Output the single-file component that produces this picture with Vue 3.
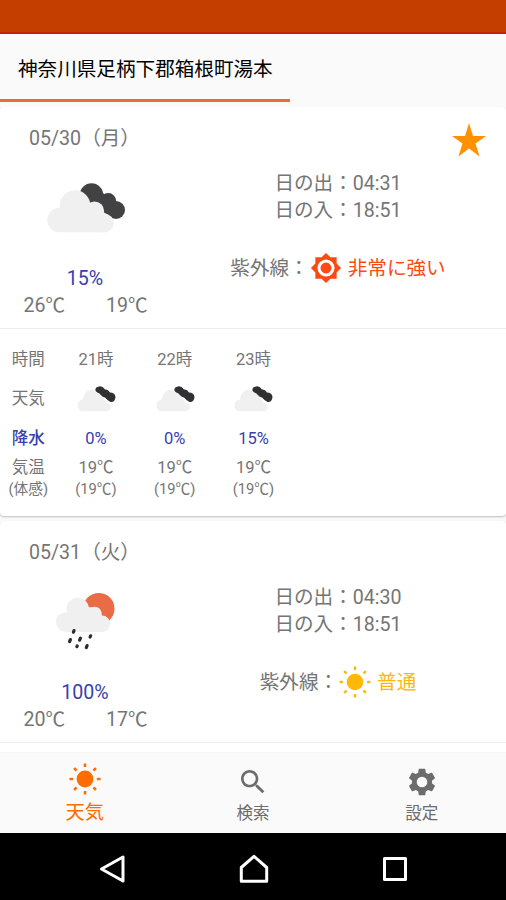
<script setup>
const days = [
  {
    date: '05/30（月）', starred: true, icon: 'cloudy', rain: '15%', high: '26℃', low: '19℃',
    sunrise: '04:31', sunset: '18:51', uv: '非常に強い', level: 'strong',
    hours: [
      { time: '21時', rain: '0%', temp: '19℃', feels: '(19℃)' },
      { time: '22時', rain: '0%', temp: '19℃', feels: '(19℃)' },
      { time: '23時', rain: '15%', temp: '19℃', feels: '(19℃)' }
    ]
  },
  {
    date: '05/31（火）', starred: false, icon: 'rain', rain: '100%', high: '20℃', low: '17℃',
    sunrise: '04:30', sunset: '18:51', uv: '普通', level: 'normal', hours: []
  }
]
const rays = [0, 45, 90, 135, 180, 225, 270, 315]
</script>

<template>
  <div class="screen">
    <div class="status"></div>
    <header class="tabs"><div class="tab">神奈川県足柄下郡箱根町湯本</div></header>

    <main class="list">
      <section v-for="day in days" :key="day.date" class="card">
        <div class="top">
          <div class="head">
            <span class="date">{{ day.date }}</span>
            <svg v-if="day.starred" class="star" viewBox="0 0 34 34">
              <path d="M17 0 21 13H34L23.5 20.4 27.6 33.5 17 25.4 6.4 33.5 10.5 20.4 0 13H13Z" />
            </svg>
          </div>
          <div class="body">
            <div class="summary">
              <div class="pic">
                <svg v-if="day.icon === 'cloudy'" class="cloudy" viewBox="47 183 78 50">
                  <g fill="#424244">
                    <circle cx="91.5" cy="195" r="11.7" />
                    <circle cx="108.3" cy="201" r="7.9" />
                    <circle cx="116" cy="210" r="9" />
                    <path d="M88 199 99 190 113 201 112 217 94 207Z" />
                  </g>
                  <g fill="#f0f0f0">
                    <circle cx="59.5" cy="220" r="12.2" />
                    <circle cx="75" cy="205.5" r="15.3" />
                    <circle cx="94.5" cy="211" r="9.6" />
                    <circle cx="104.5" cy="223" r="9.3" />
                    <path d="M59 210 80 203 97 204 106 215V232.3H59Z" />
                  </g>
                </svg>
                <svg v-else class="rain" viewBox="56 592 60 58">
                  <circle cx="98.8" cy="608.6" r="15.7" fill="#ea6c46" />
                  <g fill="#f0f0f0">
                    <circle cx="65.7" cy="622" r="9.8" />
                    <circle cx="77.7" cy="609" r="11.2" />
                    <circle cx="94.5" cy="614" r="7.3" />
                    <circle cx="102" cy="623.7" r="8.2" />
                    <path d="M66 614 80 606 96 608 103 617V631.9H66Z" />
                  </g>
                  <g stroke="#2b2b2b" stroke-width="3.2" stroke-linecap="round">
                    <path d="M73.4 632.2 74 630.6M69.6 641.6 70.4 639.6M79.6 640.2 80.4 638.2M90.1 637 90.6 635.8M76.9 646.7 77.2 646M86.3 647.6 87.1 645.6" />
                  </g>
                </svg>
              </div>
              <div class="line blue">{{ day.rain }}</div>
              <div class="line temps"><span>{{ day.high }}</span><span>{{ day.low }}</span></div>
            </div>
            <div class="detail">
              <div class="line">日の出：{{ day.sunrise }}</div>
              <div class="line">日の入：{{ day.sunset }}</div>
              <div class="uv">
                <span>紫外線：</span>
                <svg v-if="day.level === 'strong'" class="uvicon strong" viewBox="0 0 24 24">
                  <path d="M20 8.69V4h-4.69L12 .69 8.69 4H4v4.69L.69 12 4 15.31V20h4.69L12 23.31 15.31 20H20v-4.69L23.31 12 20 8.69zM12 18.4a6.4 6.4 0 1 1 0-12.8 6.4 6.4 0 0 1 0 12.8zM12 7.9a4.1 4.1 0 1 0 0 8.2 4.1 4.1 0 0 0 0-8.2z" />
                </svg>
                <svg v-else class="uvicon normal" viewBox="-16 -16 32 32">
                  <circle r="8.3" />
                  <rect v-for="r in rays" :key="r" x="-1.2" y="-15.4" width="2.4" height="3.4" rx=".5" :transform="`rotate(${r})`" />
                </svg>
                <span :class="day.level">{{ day.uv }}</span>
              </div>
            </div>
          </div>
        </div>
        <div v-if="day.hours.length" class="hours">
          <div class="col labels">
            <span class="time">時間</span><span class="sky">天気</span><span class="prob">降水</span>
            <span class="temp">気温</span><span class="feels">(体感)</span>
          </div>
          <div v-for="h in day.hours" :key="h.time" class="col">
            <span class="time">{{ h.time }}</span>
            <span class="sky">
              <svg viewBox="0 0 39 26">
                <path d="M19 6Q17 2 21 .8 25-.8 28 3.5 31 3 33 6.5 38 6.5 38.5 11 38 16.5 33.5 16Q30 14 28 11.5 24 11 22.5 7.5Z" fill="#303032" />
                <path d="M5 25.3Q.3 24 .5 19 1 14 6 13.5 7 5 13.5 3.8 19 3.8 21 8 24 7.5 26.5 12.5 28.5 14 29 16.5 34 17.5 34 20.5 33.5 25.3 29 25.3Z" fill="#f0f0f0" />
              </svg>
            </span>
            <span class="prob">{{ h.rain }}</span>
            <span class="temp">{{ h.temp }}</span>
            <span class="feels">{{ h.feels }}</span>
          </div>
        </div>
      </section>
    </main>

    <nav class="menu">
      <div class="item active">
        <svg viewBox="-16 -16 32 32">
          <circle r="8.4" />
          <rect v-for="r in rays" :key="r" x="-1.3" y="-15.5" width="2.6" height="3.6" rx=".5" :transform="`rotate(${r})`" />
        </svg>
        <span>天気</span>
      </div>
      <div class="item">
        <svg viewBox="0 0 24 24"><path d="M15.5 14h-.79l-.28-.27C15.41 12.59 16 11.11 16 9.5 16 5.91 13.09 3 9.5 3S3 5.91 3 9.5 5.91 16 9.5 16c1.61 0 3.09-.59 4.23-1.57l.27.28v.79l5 4.99L20.49 19l-4.99-5zm-6 0C7.01 14 5 11.99 5 9.5S7.01 5 9.5 5 14 7.01 14 9.5 11.99 14 9.5 14z" /></svg>
        <span>検索</span>
      </div>
      <div class="item">
        <svg viewBox="0 0 24 24"><path d="M19.43 12.98c.04-.32.07-.64.07-.98s-.03-.66-.07-.98l2.11-1.65c.19-.15.24-.42.12-.64l-2-3.46c-.12-.22-.39-.3-.61-.22l-2.49 1c-.52-.4-1.08-.73-1.69-.98l-.38-2.65C14.46 2.18 14.25 2 14 2h-4c-.25 0-.46.18-.49.42l-.38 2.65c-.61.25-1.17.59-1.69.98l-2.49-1c-.23-.09-.49 0-.61.22l-2 3.46c-.13.22-.07.49.12.64l2.11 1.65c-.04.32-.07.65-.07.98s.03.66.07.98l-2.11 1.65c-.19.15-.24.42-.12.64l2 3.46c.12.22.39.3.61.22l2.49-1c.52.4 1.08.73 1.69.98l.38 2.65c.03.24.24.42.49.42h4c.25 0 .46-.18.49-.42l.38-2.65c.61-.25 1.17-.59 1.69-.98l2.49 1c.23.09.49 0 .61-.22l2-3.46c.12-.22.07-.49-.12-.64l-2.11-1.65zM12 16a4 4 0 1 1 0-8 4 4 0 0 1 0 8z" /></svg>
        <span>設定</span>
      </div>
    </nav>

    <footer class="system">
      <svg viewBox="0 0 30 30"><path d="M3.5 15 25 3V27Z" /></svg>
      <svg viewBox="0 0 30 30"><path d="M2.3 27.3V13.5L15 2.3 27.7 13.5V27.3Z" /></svg>
      <svg viewBox="0 0 30 30"><path d="M4.5 4.5H25.5V25.5H4.5Z" /></svg>
    </footer>
  </div>
</template>

<style>
body { margin: 0; }
</style>
<style scoped>
.screen { width: 506px; height: 900px; display: flex; flex-direction: column; overflow: hidden; background: #fafafa; color: #757575; font: 19.6px/26.6px Roboto, "Noto Sans CJK JP", sans-serif; }
.status { height: 34px; flex: none; box-sizing: border-box; background: #c43e00; border-bottom: 2px solid #c32208; }
.tabs { height: 73px; flex: none; display: flex; align-items: flex-start; background: #fafafa; }
.tab { box-sizing: border-box; width: 290px; height: 68px; padding-left: 18px; line-height: 71px; color: #000; border-bottom: 3px solid #ec6c38; white-space: nowrap; }
.list { height: 646px; flex: none; overflow: hidden; display: flex; flex-direction: column; gap: 5px; }
.card { flex: none; background: #fff; border-radius: 4px; box-shadow: 0 1px 2px rgba(0, 0, 0, .25); }
.card:last-child { height: 260px; }
.top { height: 222px; box-sizing: border-box; border-bottom: 1px solid #eee; }
.head { height: 62px; box-sizing: border-box; padding: 0 20px 0 29px; display: flex; justify-content: space-between; align-items: center; }
.date { padding-top: 3px; }
.star { width: 34px; height: 34px; margin-top: 4px; fill: #ff9100; }
.body { display: grid; grid-template-columns: 169px 1fr; }
.summary { display: flex; flex-direction: column; align-items: center; }
.pic { height: 97px; display: flex; justify-content: center; align-items: flex-start; }
.cloudy { width: 78px; height: 50px; margin: 14px 0 0 2px; }
.rain { width: 60px; height: 58px; margin: 9px 0 0 2px; }
.line { height: 26.6px; white-space: nowrap; }
.blue { padding-left: 1px; color: #3840ae; }
.temps { width: 124px; padding-left: 2px; display: flex; justify-content: space-between; }
.detail { padding: 2px 0 0 1px; display: flex; flex-direction: column; align-items: center; }
.uv { height: 32px; margin-top: 28px; display: flex; align-items: center; white-space: nowrap; }
.uv span { padding-top: 3px; }
.uvicon { width: 32px; height: 32px; margin: 0 6px 0 1px; }
.strong { color: #fb4a14; fill: #fb4a14; }
.normal { color: #ffb80a; fill: #ffb80a; }
.hours { height: 187px; display: flex; font-size: 16.5px; }
.col { width: 78.8px; padding-top: 18px; box-sizing: border-box; display: flex; flex-direction: column; align-items: center; }
.labels { width: 56.5px; }
.time { height: 26px; }
.sky { height: 26px; margin-top: 13px; }
.sky svg { display: block; width: 39px; height: 26px; margin: 0 0 0 1px; }
.prob { height: 26px; margin-top: 14px; color: #3840ae; }
.labels .prob { font-weight: 500; }
.temp { height: 26px; margin-top: 3px; }
.feels { height: 22px; margin-top: -3px; font-size: 14.7px; line-height: 22px; }
.menu { height: 80px; flex: none; display: grid; grid-template-columns: repeat(3, 1fr); background: #fafafa; box-shadow: 0 0 1px rgba(0, 0, 0, .2); }
.item { display: flex; flex-direction: column; align-items: center; font-size: 16.5px; color: #6c6c6c; }
.item svg { width: 32px; height: 32px; margin-top: 13px; fill: currentColor; }
.item span { line-height: 31px; }
.active { padding-left: 1px; color: #ff6d00; font-size: 19.3px; }
.active svg { margin-top: 10px; }
.active span { line-height: 35px; }
.system { height: 67px; flex: none; display: flex; justify-content: center; gap: 110.7px; padding: 21px 0 0 2px; box-sizing: border-box; background: #000; }
.system svg { width: 30px; height: 30px; fill: none; stroke: #fff; stroke-width: 3; stroke-linejoin: round; }
</style>
